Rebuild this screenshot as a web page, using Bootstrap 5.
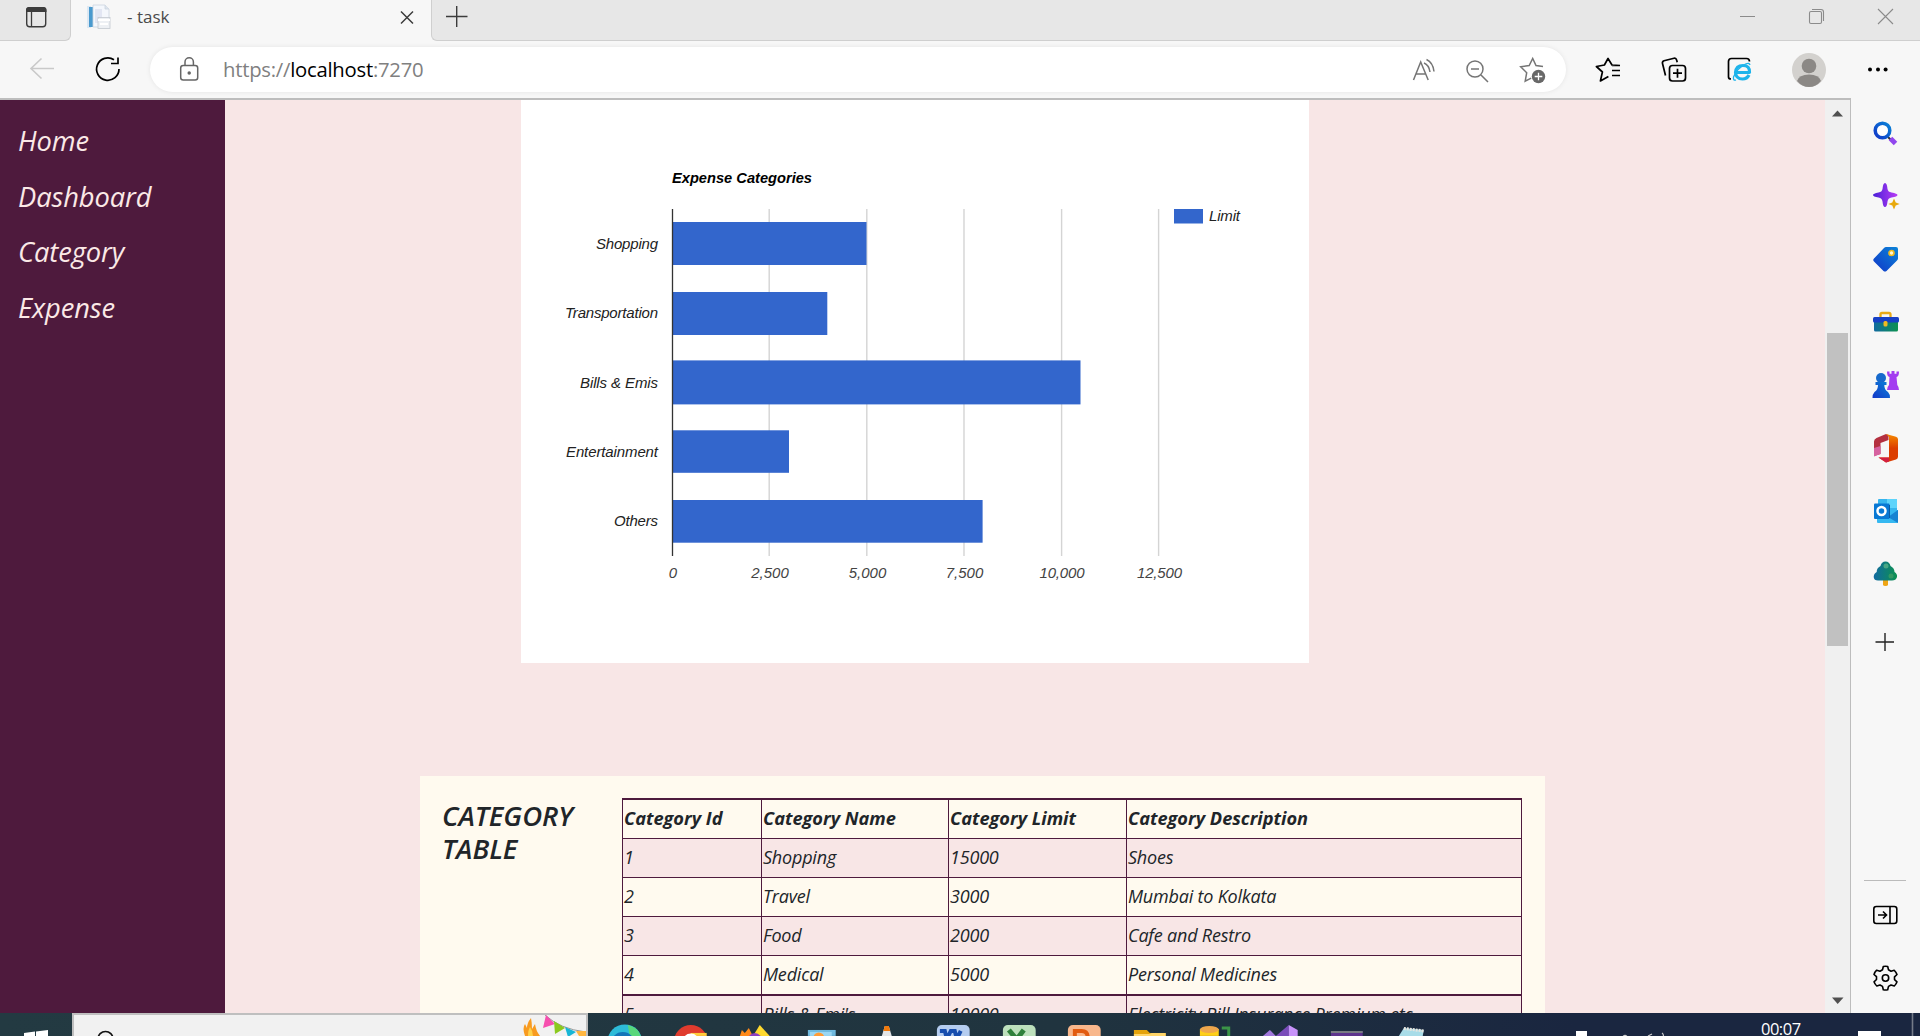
<!DOCTYPE html>
<html lang="en">
<head>
<meta charset="utf-8">
<title>- task</title>
<link href="https://cdn.jsdelivr.net/npm/bootstrap@5.3.0/dist/css/bootstrap.min.css" rel="stylesheet">
<style>
body{width:1920px;height:1036px;overflow:hidden;font-family:"Open Sans","Noto Sans",sans-serif;background:#f7f7f7}
svg{display:block;flex:none}
.tabstrip{height:41px;background:#f7f7f7}
.strip-seg{background:#e7e7e7;border-bottom:1px solid #cfcfcf}
.seg-left{width:71px;border-right:1px solid #cfcfcf;border-bottom-right-radius:6px;padding-left:25px}
.seg-right{border-left:1px solid #cfcfcf;border-bottom-left-radius:6px;padding-left:14px;padding-right:25px}
.active-tab{width:360px;padding:0 17px 0 15px;color:#4a4a4a;font-size:17px;letter-spacing:0}
.toolbar-row{height:57px;padding:0 29px 0 29px}
.address{width:1416px;height:45px;margin:6px 0 0 29px;border-radius:23px;background:#fff;box-shadow:0 0 5px rgba(0,0,0,.08);padding:0 20px 0 28px}
.url{font-size:20.3px;letter-spacing:-.25px;color:#808080;margin-left:23px}
.url span{color:#000}
.viewport-frame{height:915px;border-top:2px solid #bdbdbd}
.side-menu{width:225px;background:#4e1a3d;padding:13px 18px}
.side-menu a{color:#fbe9e7;font-style:italic;font-size:27.3px;letter-spacing:-.1px;height:55.5px;line-height:55.5px;text-decoration:none;display:block;padding:0}
.content{width:1600px;background:#f8e6e6;overflow:hidden}
.chart-box{width:788px;height:563px;margin-left:296px;background:#fff}
.cat-panel{width:1125px;height:400px;margin:113px 0 0 195px;background:#fffaef;padding:22px 23px}
.cat-panel h2{width:180px;margin:0 0 0 -1px;padding-top:1px;font-size:27.5px;font-weight:600;font-style:italic;line-height:33px;letter-spacing:-.05px;color:#212529}
.cat-table{width:900px;table-layout:fixed;font-style:italic;font-size:18px;letter-spacing:-.2px;border-collapse:collapse;color:#212529}
.cat-table th,.cat-table td{height:39px;padding:0 0 2px 1px;border:1px solid #4e1a3d;line-height:36px;white-space:nowrap}
.cat-table th{border-top-width:2px;font-weight:700;font-size:18.2px;letter-spacing:0}
.cat-table tbody tr:nth-child(odd){background:#f8e6e6}
.cat-table tbody tr:last-child td{border-top-width:2px}
.scroller{width:25px;background:#f0f0f0;padding:10px 2px 7px}
.thumb{height:313px;width:21px;margin-top:216px;background:#c1c1c1}
.edge-bar{width:70px;border-left:1px solid #bdbdbd;background:#f7f7f7;padding:3px 2px 0 0}
.edge-cell{height:63px;width:68px}
.taskbar{height:23px;overflow:hidden;background:linear-gradient(90deg,#233a42 0,#20343f 55%,#1a2640 82%)}
.search-box{width:516px;height:23px;border:2px solid #bfbfbf;border-bottom:0;background:#f1f1f1}
.task-cell{width:65.6px}
.clock{font-size:16.5px;line-height:16px;color:#fff;letter-spacing:-.5px}
</style>
</head>
<body class="d-flex flex-column">
<div class="tabstrip d-flex">
  <div class="strip-seg seg-left"><svg width="24" height="34" viewBox="0 0 24 34"><rect x="1.7" y="7.7" width="19" height="19" rx="3" fill="none" stroke="#3c3c3c" stroke-width="1.4"/><path d="M1 12V10q0-3 3-3h14.500q3 0 3 3v2z" fill="#3c3c3c"/><path d="M6.500 12v14.500" stroke="#3c3c3c" stroke-width="1.300"/></svg></div>
  <div class="active-tab d-flex">
    <svg width="25" height="32" viewBox="0 0 25 32"><path d="M1 6h4v22H1z" fill="#dce8f3"/><path d="M3 7h4v20H3z" fill="#4a9ace"/><path d="M7 5h12l4 4v18H7z" fill="#f4f7fc" stroke="#ccd4df" stroke-width=".8"/><path d="M19 5v4h4" fill="#dde4ed" stroke="#ccd4df" stroke-width=".8"/><path d="M9 9h7v14H9z" fill="#e2e6f3"/><rect x="12" y="17.500" width="12" height="11" fill="#edf0f4" stroke="#c3c9d0" stroke-width=".8"/><path d="M12 20h12M14 24h8" stroke="#fff" stroke-width="2"/></svg>
    <span class="ms-3 flex-grow-1" style="line-height:33px">- task</span>
    <svg width="14" height="34" viewBox="0 0 14 34"><path d="M1 11.500l12 12M13 11.500l-12 12" stroke="#3c3c3c" stroke-width="1.500"/></svg>
  </div>
  <div class="strip-seg seg-right flex-grow-1 d-flex justify-content-between">
    <svg width="22" height="34" viewBox="0 0 22 34"><path d="M0 16.500h21.500M10.700 6v21" stroke="#3c3c3c" stroke-width="1.400"/></svg>
    <svg width="156" height="34" viewBox="0 0 156 34" fill="none" stroke="#8b8b8b" stroke-width="1.100"><path d="M1 16.500h15M139 9l15 15M154 9l-15 15"/><rect x="70.500" y="11.500" width="12" height="12" rx="1.500"/><path d="M73 9.500h9q2.500 0 2.500 2.500v9"/></svg>
  </div>
</div>
<div class="toolbar-row d-flex">
  <svg width="92" height="57" viewBox="0 0 92 57" fill="none"><path d="M25 27.500H2M12.500 17.500L2 27.500l10.500 10" stroke="#c9c9c9" stroke-width="1.600"/><path d="M90 28a11.200 11.200 0 1 1-5-9.200M89 16.500v6h-7" stroke="#000" stroke-width="1.700"/></svg>
  <div class="address d-flex align-items-center">
    <svg width="22" height="30" viewBox="0 0 22 30" fill="none" stroke="#666" stroke-width="1.500"><rect x="2.700" y="10.500" width="17" height="14.500" rx="2.500"/><path d="M7 10.500V7a4.200 4.200 0 0 1 8.400 0v3.500"/><circle cx="11.200" cy="18" r="1" fill="#555"/></svg>
    <div class="url flex-grow-1">https://<span>localhost</span>:7270</div>
    <svg width="134" height="30" viewBox="0 0 134 30" fill="none" stroke="#757575" stroke-width="1.500"><path d="M1.500 25L8.700 7l7.500 18M4 19h10M14.500 4.500q6.500 3 7.500 12M12 8q5 2 6 9"/><circle cx="63" cy="14" r="8"/><path d="M59 14h8M69 20l7 7"/><path d="M131 11.500l-7-1-3.300-7-3.500 7-8.500 1.200 6 6-1.500 8.500 6-3"/><circle cx="126.500" cy="21.500" r="6.700" fill="#686868" stroke="none"/><path d="M122.700 21.500h7.600M126.500 17.700v7.600" stroke="#fff" stroke-width="1.300"/></svg>
  </div>
  <svg class="ms-auto" width="324" height="57" viewBox="1567 41 324 57" fill="none" stroke="#000" stroke-width="1.700" stroke-linejoin="round"><path d="M1620 65.500l-8-.5-4-6.500-3.600 6.500-8 1.500 6 5.500-2 9 8-4.500M1612 65.500h8M1612 70.500h8M1612 75.500h8"/><path d="M1665.500 75.500l-3-12q-.5-2 1.500-2.700l10-2.500q2-.5 2.700 2l.5 2"/><rect x="1669.500" y="65.500" width="16" height="15.500" rx="3"/><path d="M1677.500 68.700v9M1673 73.200h9"/><path d="M1731 79q-2.500 0-2.500-2V61.500q0-3 3-3h15q3 0 3 3"/><path d="M1735.500 72.500h14q.5-7-6.500-7t-7.500 7q.5 6.500 7 6.500 4.500 0 6.500-4" stroke="#1eb4eb" stroke-width="3.200"/><path d="M1736 80q-3 1-2.500-3 3-8 12-13 4-1.500 4.500 1" stroke="#1eb4eb" stroke-width="1.300"/><circle cx="1809" cy="70" r="17" fill="#d3d1ce" stroke="none"/><circle cx="1809" cy="66" r="7.300" fill="#8b8885" stroke="none"/><path d="M1797 81q2-6.500 12-6.500t12 6.500q-5 6-12 6t-12-6" fill="#8b8885" stroke="none"/><g fill="#000" stroke="none"><circle cx="1870" cy="69.500" r="2"/><circle cx="1878" cy="69.500" r="2"/><circle cx="1885.600" cy="69.500" r="2"/></g></svg>
</div>
<div class="d-flex" style="height:915px">
  <div class="viewport-frame d-flex">
    <nav class="side-menu nav flex-column flex-nowrap">
      <a href="#">Home</a><a href="#">Dashboard</a><a href="#">Category</a><a href="#">Expense</a>
    </nav>
    <main class="content">
      <div class="chart-box">
        <svg width="788" height="563" viewBox="521 100 788 563" font-family="Liberation Sans, Arial, sans-serif" font-style="italic" font-size="15">
          <text x="672" y="183" font-weight="bold" textLength="140" lengthAdjust="spacingAndGlyphs">Expense Categories</text>
          <path d="M769.200 209v347M866.800 209v347M964 209v347M1061.600 209v347M1158.600 209v347" stroke="#d4d4d4" stroke-width="1.400"/>
          <g fill="#36c"><rect x="672" y="222" width="194.500" height="43"/><rect x="672" y="292" width="155.300" height="43"/><rect x="672" y="360.400" width="408.500" height="44"/><rect x="672" y="430.300" width="117" height="42.500"/><rect x="672" y="500" width="310.600" height="42.700"/><rect x="1174" y="209" width="29" height="14.500"/></g>
          <path d="M672.500 209v347" stroke="#333" stroke-width="1.300"/>
          <g fill="#222"><text x="1209" y="221" textLength="31">Limit</text>
          <g text-anchor="end"><text x="658" y="249" textLength="62">Shopping</text><text x="658" y="318" textLength="93">Transportation</text><text x="658" y="388" textLength="78">Bills &amp; Emis</text><text x="658" y="457" textLength="92">Entertainment</text><text x="658" y="526" textLength="44">Others</text></g></g>
          <g text-anchor="middle" fill="#444"><text x="673" y="577.500">0</text><text x="770" y="577.500">2,500</text><text x="867.500" y="577.500">5,000</text><text x="964.500" y="577.500">7,500</text><text x="1062" y="577.500" textLength="45">10,000</text><text x="1159.500" y="577.500" textLength="45">12,500</text></g>
        </svg>
      </div>
      <div class="cat-panel d-flex align-items-start">
        <h2>CATEGORY TABLE</h2>
        <table class="cat-table">
          <colgroup><col style="width:139px"><col style="width:187px"><col style="width:178px"><col></colgroup>
          <thead><tr><th>Category Id</th><th>Category Name</th><th>Category Limit</th><th>Category Description</th></tr></thead>
          <tbody>
            <tr><td>1</td><td>Shopping</td><td>15000</td><td>Shoes</td></tr>
            <tr><td>2</td><td>Travel</td><td>3000</td><td>Mumbai to Kolkata</td></tr>
            <tr><td>3</td><td>Food</td><td>2000</td><td>Cafe and Restro</td></tr>
            <tr><td>4</td><td>Medical</td><td>5000</td><td>Personal Medicines</td></tr>
            <tr><td>5</td><td>Bills &amp; Emi's</td><td>10000</td><td>Electricity Bill,Insurance Premium,etc</td></tr>
          </tbody>
        </table>
      </div>
    </main>
    <div class="scroller d-flex flex-column">
      <svg width="21" height="7" viewBox="0 0 21 7"><path d="M5 6.500L10.500.5l5.500 6z" fill="#505050"/></svg>
      <div class="thumb"></div>
      <svg class="mt-auto" width="21" height="9" viewBox="0 0 21 9"><path d="M5 .5h11.500L10.700 7z" fill="#505050"/></svg>
    </div>
  </div>
  <aside class="edge-bar d-flex flex-column align-items-center">
    <div class="edge-cell d-flex align-items-center justify-content-center"><svg width="32" height="32" viewBox="0 0 32 32"><defs><linearGradient id="bl" x1="1" y1="0" x2="0" y2="1"><stop stop-color="#0b84d8"/><stop offset="1" stop-color="#1237c8"/></linearGradient><linearGradient id="pu"><stop stop-color="#4a20d8"/><stop offset="1" stop-color="#b83cf5"/></linearGradient><linearGradient id="gr"><stop stop-color="#116aa0"/><stop offset="1" stop-color="#0d9150"/></linearGradient><linearGradient id="of" x1="0" y1="0" x2="0" y2="1"><stop stop-color="#f58a00"/><stop offset=".5" stop-color="#dc3d00"/></linearGradient></defs><path d="M19 20l3 3" stroke="#333" stroke-width="2"/><circle cx="13.500" cy="13.500" r="7.300" fill="#fff" stroke="url(#bl)" stroke-width="3.500"/><path d="M21.500 21.500l5 5" stroke="#9147ee" stroke-width="5"/></svg></div>
    <div class="edge-cell d-flex align-items-center justify-content-center"><svg width="32" height="32" viewBox="0 0 32 32"><path d="M16 3q2 0 2.500 6 .5 3 4 3.500 6 1 6 2.500t-6 2.500q-3.500.5-4 4Q18 27 16 27t-2.500-5.500q-.5-3.500-4-4Q4 16.500 4 15t5.500-2.500q3.500-.5 4-3.500Q14 3 16 3z" fill="url(#pu)"/><path d="M25 18.500l1.700 4 4 1.500-4 1.500-1.700 4-1.700-4-4-1.500 4-1.500z" fill="#e8a90c"/></svg></div>
    <div class="edge-cell d-flex align-items-center justify-content-center"><svg width="32" height="32" viewBox="0 0 32 32"><path d="M17 4h10q2 0 2 2v9.500q0 1-1 2L17.500 28q-1.500 1-3 0L5 18.500q-1.500-1.500 0-3L15 5q1-1 2-1z" fill="url(#bl)"/><circle cx="22.500" cy="10" r="2.500" fill="#fff8d5" stroke="#efba20" stroke-width="1.700"/></svg></div>
    <div class="edge-cell d-flex align-items-center justify-content-center"><svg width="32" height="32" viewBox="0 0 32 32"><path d="M11.500 12V8.500Q11.500 7 13 7h7q1.500 0 1.500 1.500V12" fill="none" stroke="#e9a916" stroke-width="2.300"/><rect x="5" y="13" width="24" height="12.500" rx="1.500" fill="url(#gr)"/><rect x="4" y="11" width="26" height="5.500" rx="1.500" fill="#173fc5"/><rect x="14.500" y="15" width="4" height="5.500" rx="1.500" fill="#f1b922"/></svg></div>
    <div class="edge-cell d-flex align-items-center justify-content-center"><svg width="32" height="32" viewBox="0 0 32 32"><path d="M18 2.500h2.500v2.200h2V2h3v2.700h2V2.500H30q0 5-2.500 5.500l.8 8q1.700 2 1.700 5H18q0-3 2-5l.5-8Q18 7.500 18 2.500z" fill="#a33cf0"/><circle cx="12" cy="9" r="5" fill="#1669cc"/><path d="M6.500 13h11v3h-2.200q0 5 3.700 7 2 2 2 6H3.500q0-4 2-6 3.500-2 3.500-7H6.500z" fill="url(#bl)"/></svg></div>
    <div class="edge-cell d-flex align-items-center justify-content-center"><svg width="32" height="32" viewBox="0 0 32 32"><path d="M17 2l2.500 1v5l-8 3v11l-6.500 2V9.500Q5 7 7.500 6z" fill="#b43040"/><path d="M5 16l6.500-2v8L5 24.500z" fill="#d662a0"/><path d="M17 2l10 2.700q2 .5 2 2.500v17.500q0 2-2 2.700L17 30.500l-7.500-5H20V5z" fill="url(#of)"/><path d="M9.500 25.500H20v4l-3 1z" fill="#d32041"/></svg></div>
    <div class="edge-cell d-flex align-items-center justify-content-center"><svg width="32" height="32" viewBox="0 0 32 32"><rect x="9" y="4" width="19" height="15" rx="1" fill="#36b5ee"/><path d="M18 4h10v9H18z" fill="#5ed4fb"/><path d="M8 15l21 0v12q0 1-1 1H9q-1 0-1-1z" fill="#35b8f1"/><path d="M29 15L19 22l10 6z" fill="#1683d2"/><path d="M18 10h3v13h-9z" fill="#0c3f77"/><rect x="5" y="8.500" width="15.500" height="15.500" rx="1" fill="#0878d4"/><circle cx="12.500" cy="16" r="4" fill="none" stroke="#fff" stroke-width="2.500"/></svg></div>
    <div class="edge-cell d-flex align-items-center justify-content-center"><svg width="32" height="32" viewBox="0 0 32 32"><path d="M14 21h5v5.500q0 1.500-2.500 1.500T14 26.500z" fill="#efa514"/><path d="M16.500 3.500q4 0 5 4.500 4 2 4 6 3 2 2.500 5-1 3.500-5 3.500H9Q5 22.500 4.700 19q0-3.500 3-5-.2-4 3.800-6 1-4.500 5-4.500z" fill="url(#gr)"/><circle cx="17" cy="8" r="2.500" fill="#48a784"/><circle cx="22" cy="18" r="2.500" fill="#329862"/></svg></div>
    <svg style="margin-top:21px" width="32" height="32" viewBox="0 0 32 32"><path d="M6.500 16H25M16 7v18" stroke="#222" stroke-width="1.400"/></svg>
    <div class="mt-auto" style="width:42px;height:1px;background:#bbb"></div>
    <svg style="margin-top:18px" width="32" height="32" viewBox="0 0 32 32" fill="none" stroke="#000" stroke-width="1.600"><rect x="4.800" y="7.500" width="23" height="17" rx="2.500"/><path d="M21 7.500v17M9 16h8.500M14 12.500l3.500 3.500-3.500 3.500"/></svg>
    <svg style="margin:31px 0 19px" width="32" height="32" viewBox="0 0 32 32" fill="none" stroke="#000" stroke-width="1.600" stroke-linejoin="round"><circle cx="16.500" cy="16" r="3.200"/><path d="M14.300 4.500Q16.500 4 18.700 4.500l.8 3.300 2.500 1.400 3.200-1q2 2 2.800 4.300l-2.500 2.300v2.800l2.500 2.200q-.8 2.500-2.700 4.200l-3.300-1-2.500 1.400-.8 3.300q-2.200.5-4.400 0l-.8-3.300L11 23l-3.200 1q-2-1.800-2.800-4.200l2.500-2.300v-2.800L5 12.500q.8-2.500 2.700-4.300l3.300 1 2.500-1.400z"/></svg>
  </aside>
</div>
<footer class="taskbar d-flex">
  <svg width="72" height="23" viewBox="0 0 72 23" fill="#fff"><path d="M24 20l11-1.500V23H24zM36 18.400L48 17v6H36z"/></svg>
  <div class="search-box d-flex justify-content-between">
    <svg width="50" height="21" viewBox="0 0 50 21"><circle cx="31.500" cy="24" r="7.500" fill="none" stroke="#111" stroke-width="1.700"/></svg>
    <svg width="66" height="21" viewBox="0 0 66 21"><path d="M5 21q-3-8 0-12l2 4q0-5 4-10 1 5 1 11l3-5q1 7 5 12z" fill="#f89b20"/><path d="M8 21q0-6 2-9 3 4 3 9z" fill="#ffd24b"/><path d="M25 0q15 14 41 17" fill="none" stroke="#999"/><path d="M26 0l9 9-12 4z" fill="#f64fae"/><path d="M34 6l11 7-10 6z" fill="#8bc91f"/><path d="M45 12l11 5-8 5z" fill="#18b6d6"/><path d="M56 16h10v5h-7z" fill="#ffb640"/></svg>
  </div>
  <div class="d-flex" style="margin-left:4px">
    <svg class="task-cell" height="23" viewBox="-33 0 66 23"><circle cy="29" r="17.500" fill="#2dbbd8"/><path d="M3 12q10 2 13 11H5z" fill="#58d77b"/><circle cx="-2" cy="31" r="12" fill="#1475b8"/></svg>
    <svg class="task-cell" height="23" viewBox="-33 0 66 23"><circle cy="29" r="17" fill="#e03b2e"/><path d="M0 20h16v3H0z" fill="#ffcd3c"/><circle cy="29" r="8.500" fill="#fff"/></svg>
    <svg class="task-cell" height="23" viewBox="-33 0 66 23"><path d="M-16 23l2-6 3 3 4-5 4 8z" fill="#ff8a1b"/><path d="M-1 20l5-8 10 11H-2z" fill="#ffd92e"/><path d="M-7 23q6-6 12 0z" fill="#8d3fc0"/></svg>
    <svg class="task-cell" height="23" viewBox="-33 0 66 23"><path d="M-14 17h28v6h-28z" fill="#6fb9de"/><path d="M-12 19h22v4h-22z" fill="#9bd6f2"/><circle cx="-3" cy="25" r="5.500" fill="#ff9c35"/></svg>
    <svg class="task-cell" height="23" viewBox="-33 0 66 23"><path d="M-2 13h4l3 10H-5z" fill="#e3e5e7"/><path d="M-2 13h4l1.500 5h-7z" fill="#f27a0b"/></svg>
    <svg class="task-cell" height="23" viewBox="-33 0 66 23"><rect x="-16" y="12" width="33" height="20" rx="5" fill="#b5cdf0"/><path d="M-13 18h5l2 8 4-8h4l2 8 4-8" fill="none" stroke="#174eae" stroke-width="4"/></svg>
    <svg class="task-cell" height="23" viewBox="-33 0 66 23"><rect x="-16" y="12" width="33" height="20" rx="5" fill="#bde0bc"/><path d="M-10 17l10 12M5 17l-9 12" stroke="#2f803b" stroke-width="5"/></svg>
    <svg class="task-cell" height="23" viewBox="-33 0 66 23"><rect x="-16" y="12" width="33" height="20" rx="5" fill="#f8b78c"/><path d="M-9 28V18h7q6 0 6 7" fill="none" stroke="#e25b10" stroke-width="4"/></svg>
    <svg class="task-cell" height="23" viewBox="-33 0 66 23"><path d="M-16 17h13l3 3h16v3h-32z" fill="#e4a30c"/><path d="M-16 23v-2H-1l3-1h14v3z" fill="#ffd569"/></svg>
    <svg class="task-cell" height="23" viewBox="-33 0 66 23"><path d="M-15 16H4v7h-19z" fill="#ffcf18"/><ellipse cx="-5.500" cy="16.500" rx="9.500" ry="3.500" fill="#eea64c"/><path d="M7 15h7v8" fill="none" stroke="#3b9447" stroke-width="3"/></svg>
    <svg class="task-cell" height="23" viewBox="-33 0 66 23"><path d="M-18 23l7-6 6 6z" fill="#a178dd"/><path d="M-5 23L8 12v11z" fill="#7a4cba"/><path d="M8 12l9 5v6H8z" fill="#c893fa"/></svg>
    <svg class="task-cell" height="23" viewBox="-33 0 66 23"><path d="M-16 18h32v5h-32z" fill="#5d348e"/><path d="M-16 18h32v2h-32z" fill="#777b83"/></svg>
    <svg class="task-cell" height="23" viewBox="-33 0 66 23"><path d="M-8 15l20 2-1 6h-24z" fill="#a8dce8"/><path d="M-8 15.500l20 2.500" stroke="#e5e5df" stroke-width="3" stroke-dasharray="2 1"/></svg>
  </div>
  <svg class="ms-auto" width="90" height="23" viewBox="1576 1013 90 23"><path d="M1576 1031h11v5h-11z" fill="#fff"/><path d="M1623 1036.500q2-2 4 0M1648 1036l4-2M1662 1033q1.500 1 1.500 3" stroke="#ccc" fill="none" stroke-width="1.200"/></svg>
  <div class="clock" style="margin-left:95px;width:97px;padding-top:8px">00:07</div>
  <svg width="62" height="23" viewBox="1858 1013 62 23"><path d="M1858 1031h23v5h-23z" fill="#fff"/><path d="M1912.500 1013v23" stroke="#747b88" stroke-width="1.600"/></svg>
</footer>
<script src="https://cdn.jsdelivr.net/npm/bootstrap@5.3.0/dist/js/bootstrap.bundle.min.js"></script>
</body>
</html>
